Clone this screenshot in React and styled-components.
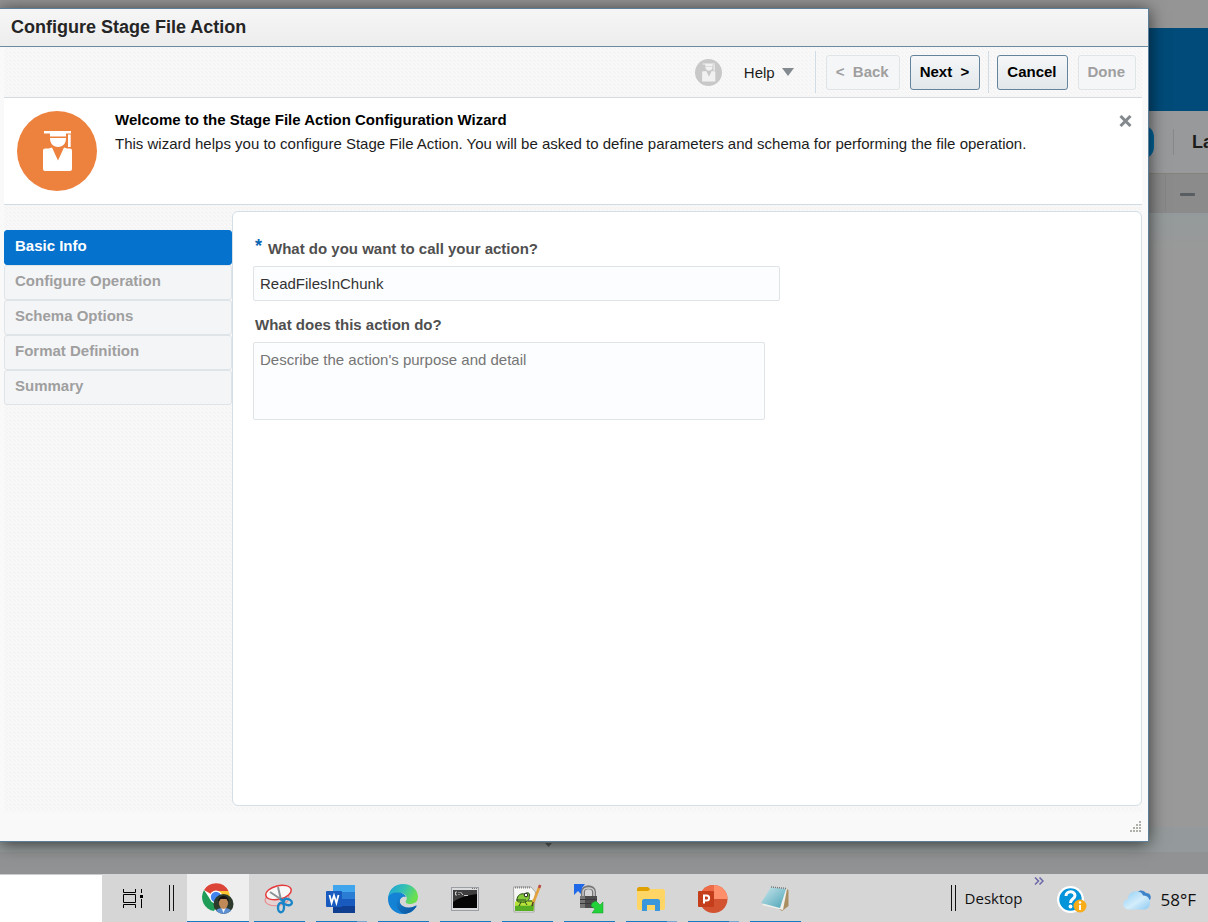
import React, { useState } from "react";
import styled, { createGlobalStyle, css } from "styled-components";

const Global = createGlobalStyle`
  *, *::before, *::after { box-sizing: border-box; }
  body { margin: 0; font-family: "Liberation Sans", Arial, sans-serif; font-size: 15px; color: #1c1c1c; }
  button, input, textarea { font: inherit; margin: 0; }
`;

const stripes = css`
  background: #f8f8f8
    linear-gradient(45deg, #f1f1f1 12%, transparent 12% 50%, #f1f1f1 50% 63%, transparent 63%) 0 0 / 4px 4px;
`;

const Screen = styled.div`
  display: flex;
  flex-direction: column;
  min-height: 100vh;
  overflow: hidden;
`;

const Workspace = styled.div`
  position: relative;
  flex: 1;
  display: flex;
  flex-direction: column;
  overflow: hidden;
  background: #999999;
`;

const TopStrip = styled.div`
  height: 28px;
  background: #959595;
`;

const BrandBar = styled.div`
  height: 83px;
  background: #004b79;
`;

const PageToolbar = styled.div`
  display: flex;
  justify-content: flex-end;
  align-items: center;
  height: 63px;
  background: #98999b;
  border-bottom: 1px solid #85847a;
`;

const Pill = styled.div`
  width: 60px;
  height: 34px;
  border-radius: 12px;
  background: #00659b;
`;

const PageDivider = styled.div`
  width: 1px;
  height: 26px;
  margin: 0 18px 0 19px;
  background: #85898c;
`;

const PageLabel = styled.div`
  width: 16px;
  overflow: hidden;
  font-size: 18px;
  line-height: 24px;
  font-weight: bold;
  color: #1c1c1c;
`;

const PageSubBar = styled.div`
  display: flex;
  justify-content: flex-end;
  height: 39px;
  background: #8b8b8b;
`;

const PageSubCell = styled.div`
  display: flex;
  align-items: center;
  padding: 2px 13px 0 14px;
  border-left: 1px solid #858585;
`;

const Minus = styled.div`
  width: 15px;
  height: 3px;
  border-radius: 1px;
  background: #575d61;
`;

const PageBody = styled.div`
  flex: 1;
  background: linear-gradient(#949a9b, #999999 40px);
`;

const PageFooter = styled.div`
  display: flex;
  justify-content: center;
  height: 47px;
  padding: 14px 112px 0 0;
  background: linear-gradient(#949a9b 25px, #919293 25px);
`;

const Dialog = styled.section`
  position: absolute;
  inset: 8px 59px 32px 0;
  display: flex;
  flex-direction: column;
  background: #f9f9f9;
  border: 1px solid #5b7f98;
  border-left: 0;
  box-shadow: 0 2px 16px rgba(0, 0, 0, 0.65);
`;

const DialogTitle = styled.h1`
  margin: 0;
  padding: 0 11px;
  font-size: 18px;
  line-height: 37px;
  font-weight: bold;
  color: #252525;
  background: linear-gradient(#f6f6f6, #ededed);
  border-bottom: 1px solid #6d8ba0;
`;

const DialogContent = styled.div`
  flex: 1;
  display: flex;
  flex-direction: column;
  margin: 0 6px 29px 4px;
  ${stripes}
`;

const Toolbar = styled.div`
  display: flex;
  justify-content: flex-end;
  align-items: center;
  gap: 10px;
  height: 51px;
  padding-right: 6px;
  border-bottom: 1px solid #d3dae0;
`;

const HelpButton = styled.button`
  display: flex;
  align-items: center;
  gap: 7px;
  margin: 0 11px 0 12px;
  padding: 0;
  border: 0;
  background: none;
  color: #1c1c1c;
`;

const Divider = styled.div`
  width: 1px;
  height: 42px;
  background: #d0dde6;
  margin: ${(p) => (p.$tight ? "0 -2px" : "0")};
`;

const ActionButton = styled.button`
  height: 35px;
  padding: 0 10px 2px 9px;
  border: 1px solid #64849c;
  border-radius: 3px;
  background: linear-gradient(#f5f7f8, #e2e7ea);
  font-weight: bold;
  color: #000;
  white-space: pre;
  &:disabled {
    border-color: #dfe4e7;
    background: #f5f6f8;
    color: #9f9f9f;
  }
`;

const Welcome = styled.div`
  display: flex;
  gap: 18px;
  height: 107px;
  padding: 13px 10px 0 13px;
  background: #fff;
  border-bottom: 1px solid #d0dde6;
`;

const WelcomeText = styled.div`
  flex: 1;
  line-height: 24px;
  color: #1c1c1c;
`;

const WelcomeTitle = styled.h2`
  margin: -3px 0 0;
  font-size: inherit;
  font-weight: bold;
  color: #000;
`;

const WelcomeBody = styled.p`
  margin: 0;
`;

const CloseButton = styled.button`
  align-self: flex-start;
  display: flex;
  padding: 4px 0;
  border: 0;
  background: none;
`;

const Body = styled.div`
  flex: 1;
  display: flex;
  padding: 6px 0;
`;

const Steps = styled.nav`
  display: flex;
  flex-direction: column;
  width: 228px;
  padding-top: 19px;
`;

const Step = styled.button`
  height: 35px;
  padding: 0 10px 4px;
  text-align: left;
  font-weight: bold;
  border: 1px solid #dfe4e9;
  border-radius: 3px;
  background: #f4f5f7;
  color: #9f9f9f;
  ${(p) =>
    p.$active &&
    css`
      border-color: #0572ce;
      background: #0572ce;
      color: #fff;
    `}
`;

const Panel = styled.form`
  flex: 1;
  display: flex;
  flex-direction: column;
  align-items: flex-start;
  padding: 26px 20px;
  background: #fff;
  border: 1px solid #d3dee6;
  border-radius: 6px;
`;

const Label = styled.label`
  padding: 0 2px;
  line-height: 22px;
  font-weight: bold;
  color: #4f4f4f;
`;

const Required = styled.span`
  font-size: 18px;
  line-height: 16px;
  color: #0a66b4;
  margin-right: 6px;
  vertical-align: 2px;
`;

const fieldStyle = css`
  display: block;
  border: 1px solid #dfe4e7;
  border-radius: 2px;
  background: #fcfdfe;
  color: #333;
  outline: 0;
`;

const TextInput = styled.input`
  ${fieldStyle}
  width: 527px;
  height: 35px;
  margin: 6px 0 13px;
  padding: 0 6px;
`;

const TextArea = styled.textarea`
  ${fieldStyle}
  width: 512px;
  height: 78px;
  margin-top: 6px;
  padding: 7px 6px;
  line-height: 20px;
  resize: none;
  &::placeholder { color: #757575; }
`;

const Grip = styled.svg`
  position: absolute;
  right: 6px;
  bottom: 8px;
`;

const Taskbar = styled.footer`
  display: flex;
  align-items: stretch;
  height: 48px;
  background: #d6d6d6;
  font-family: "Open Sans", "Noto Sans", sans-serif;
  color: #111;
`;

const SearchBox = styled.input`
  width: 102px;
  border: 0;
  border-top: 1px solid #ccc;
  background: #fff;
  outline: 0;
`;

const TaskView = styled.button`
  display: flex;
  align-items: center;
  width: 62px;
  padding: 0 0 0 20px;
  border: 0;
  background: none;
`;

const Handle = styled.div`
  align-self: center;
  width: 5px;
  height: 26px;
  margin: 0 ${(p) => p.$after}px 0 5px;
  border: solid #111;
  border-width: 0 1px;
`;

const Apps = styled.div`
  display: flex;
`;

const AppButton = styled.button`
  position: relative;
  display: flex;
  align-items: center;
  justify-content: center;
  width: 62px;
  padding: 2px 2px 0 0;
  border: 0;
  background: none;
  &::after {
    content: "";
    position: absolute;
    bottom: 0;
    left: 5px;
    right: 6px;
    height: 1px;
    background: ${(p) => (p.$multi ? "linear-gradient(90deg, #1878c0 41px, #76a9d2 41px)" : "#1878c0")};
  }
  ${(p) =>
    p.$current &&
    css`
      padding-right: 0;
      background: #eeeeee;
      &::after { left: 0; right: 0; }
    `}
`;

const Tray = styled.div`
  display: flex;
  align-items: center;
  margin-left: auto;
  padding-right: 12px;
`;

const TrayLabel = styled.span`
  font-size: 15px;
  line-height: 20px;
`;

const More = styled.button`
  align-self: flex-start;
  display: flex;
  margin: 3px 13px 0 11px;
  padding: 0;
  border: 0;
  background: none;
`;

const TrayIcon = styled.button`
  display: flex;
  margin-right: ${(p) => p.$gap}px;
  padding: 4px 0 0;
  border: 0;
  background: none;
`;

const Weather = styled.span`
  padding-top: 4px;
  font-size: 17px;
  line-height: 22px;
`;

const Graduate = ({ size, disc, mark, zoom = 1 }) => (
  <svg width={size} height={size} viewBox="0 0 80 80" aria-hidden="true">
    <circle cx="40" cy="40" r="40" fill={disc} />
    <g fill={mark} transform={`translate(40 40) scale(${zoom}) translate(-40 -40)`}>
      <path d="M27 20H54V22.500H49V25.500H33V22.500H27z" />
      <path d="M51 23.500H53.700V36H51z" />
      <path d="M33 27H49C49 32.500 46 36 41 36S33 32.500 33 27z" />
      <path d="M28 37.500C30 37.500 33 37.500 35 36.500L41 49.500L47 36.500C49 37.500 51 37.500 53 37.500Q55 37.500 55 39.500V58Q55 60 53 60H28Q26 60 26 58V39.500Q26 37.500 28 37.500z" />
    </g>
  </svg>
);

const TaskViewIcon = () => (
  <svg width="24" height="20" viewBox="0 0 24 20" fill="none" stroke="#000">
    <path d="M1.500 1V4.500H13.500V1M1.500 20V16.500H13.500V20M1.500 6.500H13.500V14.500H1.500zM19.500 1V5M19.500 11V20" />
    <path d="M18 7H21V10H18z" fill="#000" stroke="none" />
  </svg>
);

const ChromeIcon = () => (
  <svg width="32" height="32" viewBox="0 0 32 32">
    <circle cx="14" cy="14" r="14" fill="#fff" />
    <path d="M14 14L2 7A14 14 0 0 1 26.500 8H14z" fill="#dc4437" />
    <path d="M2 7A14 14 0 0 0 12 28L18 18L8 16z" fill="#1f9d58" />
    <path d="M14 8H26.500A14 14 0 0 1 14 28L19 17z" fill="#fbc62f" />
    <circle cx="14" cy="14" r="6.500" fill="#fff" />
    <circle cx="14" cy="14" r="5.200" fill="#4384ee" />
    <clipPath id="avatar"><circle cx="21.500" cy="21" r="10" /></clipPath>
    <g clipPath="url(#avatar)">
      <path d="M11 11H32V32H11z" fill="#2d3a2c" />
      <path d="M12 32C13 26 17 25 21.500 25S30 26 31 32z" fill="#5d8fd3" />
      <path d="M19 24L21.500 30L24 24z" fill="#eef2f7" />
      <ellipse cx="21.500" cy="20" rx="4.500" ry="6" fill="#c08a58" />
      <path d="M16.500 19C15.500 11 27.500 11 26.500 19L24.500 16H18.500z" fill="#17120f" />
    </g>
  </svg>
);

const SnipIcon = () => (
  <svg width="30" height="30" viewBox="0 0 30 30" fill="none">
    <ellipse cx="13" cy="15" rx="12" ry="6.500" transform="rotate(-8 13 15)" fill="#e6d2d2" stroke="#e68a8a" />
    <ellipse cx="14.500" cy="8.500" rx="13" ry="6.800" transform="rotate(-14 14.500 8.500)" fill="#f7f7f7" stroke="#e5383b" strokeWidth="1.500" />
    <path d="M14 3L17 16M6 8L18 16" stroke="#8b9296" strokeWidth="2" />
    <ellipse cx="23.500" cy="18" rx="4.500" ry="3" transform="rotate(18 23.500 18)" stroke="#1a86c8" strokeWidth="2.400" />
    <ellipse cx="17" cy="23.500" rx="3" ry="4.700" transform="rotate(4 17 23.500)" stroke="#1a86c8" strokeWidth="2.400" />
    <path d="M16 15L20 17L18 19" stroke="#1a86c8" strokeWidth="2.400" />
  </svg>
);

const WordIcon = () => (
  <svg width="30" height="28" viewBox="0 0 30 28">
    <path d="M7 0H29V7H7z" fill="#41a5ee" />
    <path d="M7 7H29V14H7z" fill="#2b7cd3" />
    <path d="M7 14H29V21H7z" fill="#185abd" />
    <path d="M7 21H29V28H7z" fill="#103f91" />
    <rect y="6" width="16" height="16" rx="1" fill="#185abd" />
    <path d="M3.500 10L5.600 18L8 10.500L10.400 18L12.500 10" fill="none" stroke="#fff" strokeWidth="1.800" />
  </svg>
);

const EdgeIcon = () => (
  <svg width="30" height="30" viewBox="0 0 30 30">
    <defs>
      <linearGradient id="edgeTop" x1="0" y1="0" x2="1" y2="0.400">
        <stop offset="0" stopColor="#1b9de2" />
        <stop offset="0.550" stopColor="#35c1b1" />
        <stop offset="1" stopColor="#6be04f" />
      </linearGradient>
      <linearGradient id="edgeLow" x1="0" y1="0" x2="1" y2="1">
        <stop offset="0" stopColor="#1585d8" />
        <stop offset="1" stopColor="#0d4f96" />
      </linearGradient>
    </defs>
    <path d="M0 14C1 5 7 0 15 0C24 0 30 6 30 13C30 18 26 20 22 20C19 20 17 19 18 17C20 14 18 9 12 9C6 9 2 11 0 14z" fill="url(#edgeTop)" />
    <path d="M0 15C0 10 5 8.500 10 8.500C14 8.500 17 10 18 13C14 12 11 15 12 19C13 24 20 27 27 22C29 21 29 22 28 23C25 28 20 30 15 30C6 30 0 23 0 15z" fill="#1583d5" />
    <path d="M12 12C8 14 7 20 10 25C12 28 15 30 18 29.700C22 29 26 26 28.500 22.500C28 21.500 27 22 26 22.500C20 25 14 23 12 19C11 16 12 13.500 15 12.500z" fill="url(#edgeLow)" />
  </svg>
);

const ConsoleIcon = () => (
  <svg width="28" height="24" viewBox="0 0 28 24">
    <rect x="0.500" y="0.500" width="27" height="23" fill="#d9dbdd" stroke="#9b9fa3" />
    <path d="M2 3H26V21H2z" fill="#050505" />
    <path d="M2 3H26V7C18 8 9 10 2 15z" fill="#3e3e3e" />
    <path d="M6 5H4.500V8H6M8 5V6M8 7V8M9.500 5L12 8M13 8.500H17" fill="none" stroke="#ccc" />
    <path d="M21 1.500H22M23 1.500H24M25 1.500H26" stroke="#777" />
  </svg>
);

const NotepadPlusIcon = () => (
  <svg width="30" height="30" viewBox="0 0 30 30">
    <path d="M1.500 3H19L23.500 8L22 28H2z" fill="#f6f7f5" stroke="#a7a9a5" />
    <path d="M3 18C9 14 16 19 22 15L21.500 27H3z" fill="#b9e23a" />
    <path d="M3 22C9 20 16 24 22 20L21.500 27H3z" fill="#58ae22" />
    <path d="M5 16C5 11 9 9 13 10C16 7 19 10 17 13C19 16 13 19 9 18C7 18 5 18 5 16z" fill="#86ca3a" stroke="#284d18" />
    <path d="M4 16H14M9 18L7 22M13 18L15 21M16 17H20" stroke="#284d18" fill="none" />
    <circle cx="14" cy="11" r="1.800" fill="#fff" stroke="#222" />
    <path d="M3 3.500H19" stroke="#888" strokeWidth="2" strokeDasharray="1 1" />
    <path d="M27 4L21 19" stroke="#e4a23c" strokeWidth="2.600" />
    <path d="M28.200 1L27 4" stroke="#b74b3e" strokeWidth="2.600" />
    <path d="M21.200 18L20 22" stroke="#574024" strokeWidth="1.500" />
  </svg>
);

const WinScpIcon = () => (
  <svg width="30" height="30" viewBox="0 0 30 30">
    <path d="M0 0H11L8 4L11 7L7 10L4 7L0 11z" fill="#1f68e8" />
    <path d="M9 13V8C9 1.500 20 1.500 20 8V13" fill="none" stroke="#777" strokeWidth="4" />
    <path d="M9 13V8C9 2.500 20 2.500 20 8V13" fill="none" stroke="#ccc" strokeWidth="1.500" />
    <path d="M6 12H23V24H6z" fill="#4c4c4c" />
    <path d="M6 12H11V24H6z" fill="#777" />
    <path d="M6 15.500H23M6 19.500H23" stroke="#3a3a3a" />
    <path d="M18 19L22 17L26 21L29 18V29H18L21 25L17 22z" fill="#22d238" stroke="#169b29" strokeWidth="0.500" />
  </svg>
);

const FolderIcon = () => (
  <svg width="28" height="24" viewBox="0 0 28 24">
    <path d="M0 2C0 1 1 0 2 0H11L13 2V6H0z" fill="#dfa000" />
    <path d="M0 4H11L14 2H26C27 2 28 3 28 4V21C28 22 27 23 26 23H2C1 23 0 22 0 21z" fill="#ffd666" />
    <path d="M5 24V14C5 13 6 12 7 12H21C22 12 23 13 23 14V24H18V18H10V24z" fill="#3b97dc" />
  </svg>
);

const PowerPointIcon = () => (
  <svg width="30" height="28" viewBox="0 0 30 28">
    <circle cx="15.500" cy="14" r="14" fill="#d35230" />
    <path d="M15.500 0A14 14 0 0 1 29.500 14H15.500z" fill="#ff8f6b" />
    <path d="M15.500 0V14H1.500A14 14 0 0 1 15.500 0z" fill="#ed6c47" />
    <rect y="6" width="16" height="16" rx="1" fill="#c43e1c" />
    <path d="M6 18.500V10.500H8.500C12 10.500 12 15.500 8.500 15.500H6" fill="none" stroke="#fff" strokeWidth="2" />
  </svg>
);

const NotepadIcon = () => (
  <svg width="28" height="28" viewBox="0 0 28 28">
    <path d="M24 3L27.500 5V21L21 26L18 24z" fill="#a98e62" />
    <path d="M22 3L26 4L22 25L1 20z" fill="#f1f1ec" />
    <defs>
      <linearGradient id="pad" x1="0" y1="0" x2="1" y2="1">
        <stop offset="0" stopColor="#cde9ee" />
        <stop offset="1" stopColor="#4ba3b7" />
      </linearGradient>
    </defs>
    <path d="M10 2L25 4L19 23L0 18z" fill="url(#pad)" />
    <path d="M10 2L26 3.500" stroke="#777" strokeWidth="1.500" strokeDasharray="1 1" />
  </svg>
);

const HelpTrayIcon = () => (
  <svg width="30" height="28" viewBox="0 0 30 28">
    <circle cx="13.500" cy="13.500" r="13.500" fill="#fff" />
    <circle cx="13.500" cy="13.500" r="11.200" fill="#0494da" />
    <path d="M9 10C9 4.500 18 4.500 18 9.500C18 13 13.500 12.500 13.500 17" fill="none" stroke="#fff" strokeWidth="3" />
    <circle cx="13.500" cy="20.500" r="1.900" fill="#fff" />
    <circle cx="23" cy="20" r="6.500" fill="#f8ac18" />
    <path d="M23 19V24" stroke="#fff" strokeWidth="2" />
    <circle cx="23" cy="16.500" r="1.200" fill="#fff" />
  </svg>
);

const CloudIcon = () => (
  <svg width="28" height="20" viewBox="0 0 28 20">
    <defs>
      <linearGradient id="cloud" x1="0" y1="0" x2="1" y2="1">
        <stop offset="0" stopColor="#8fcdf5" />
        <stop offset="0.550" stopColor="#d3edfb" />
        <stop offset="1" stopColor="#8cc9f2" />
      </linearGradient>
    </defs>
    <path d="M14 2C17 -0.500 21 0 23 3C27 3 29 6 27 10L18 8z" fill="#3f83c9" />
    <path d="M6 19.500C-1.500 19.500 -1.500 10 5 9C5 0 18 -1 20 5.500C29 5 29.500 19.500 21 19.500z" fill="url(#cloud)" />
  </svg>
);

const STEPS = ["Basic Info", "Configure Operation", "Schema Options", "Format Definition", "Summary"];

const APPS = [
  { name: "Chrome", Icon: ChromeIcon, current: true },
  { name: "Snipping Tool", Icon: SnipIcon },
  { name: "Word", Icon: WordIcon, multi: true },
  { name: "Edge", Icon: EdgeIcon },
  { name: "Command Prompt", Icon: ConsoleIcon },
  { name: "Notepad++", Icon: NotepadPlusIcon },
  { name: "WinSCP", Icon: WinScpIcon },
  { name: "File Explorer", Icon: FolderIcon, multi: true },
  { name: "PowerPoint", Icon: PowerPointIcon, multi: true },
  { name: "Notepad", Icon: NotepadIcon },
];

const GRIP_DOTS = [0, 1, 2, 3].flatMap((row) =>
  Array.from({ length: row + 1 }, (_, i) => ({ x: 9 - i * 3, y: row * 3 }))
);

export default function App() {
  const [name, setName] = useState("ReadFilesInChunk");
  const [detail, setDetail] = useState("");
  return (
    <Screen>
      <Global />
      <Workspace>
        <TopStrip />
        <BrandBar />
        <PageToolbar>
          <Pill />
          <PageDivider />
          <PageLabel>La</PageLabel>
        </PageToolbar>
        <PageSubBar>
          <PageSubCell>
            <Minus />
          </PageSubCell>
        </PageSubBar>
        <PageBody />
        <PageFooter>
          <svg width="7" height="6" viewBox="0 0 7 6" aria-hidden="true">
            <path d="M0 2H7L3.500 6z" fill="#55595b" />
          </svg>
        </PageFooter>

        <Dialog role="dialog" aria-labelledby="dialog-title">
          <DialogTitle id="dialog-title">Configure Stage File Action</DialogTitle>
          <DialogContent>
            <Toolbar>
              <Graduate size={27} disc="#c8c8c8" mark="#f1f1f1" zoom={1.35} />
              <HelpButton type="button">
                Help
                <svg width="12" height="8" viewBox="0 0 12 8" aria-hidden="true">
                  <path d="M0 0H12L6 8z" fill="#848b90" />
                </svg>
              </HelpButton>
              <Divider />
              <ActionButton disabled>{"<  Back"}</ActionButton>
              <ActionButton>{"Next  >"}</ActionButton>
              <Divider $tight />
              <ActionButton>Cancel</ActionButton>
              <ActionButton disabled>Done</ActionButton>
            </Toolbar>
            <Welcome>
              <Graduate size={80} disc="#ed813e" mark="#ffffff" />
              <WelcomeText>
                <WelcomeTitle>Welcome to the Stage File Action Configuration Wizard</WelcomeTitle>
                <WelcomeBody>
                  This wizard helps you to configure Stage File Action. You will be asked to define parameters and
                  schema for performing the file operation.
                </WelcomeBody>
              </WelcomeText>
              <CloseButton type="button" aria-label="Close">
                <svg width="13" height="12" viewBox="0 0 13 12" aria-hidden="true">
                  <path d="M1.500 1L11.500 11M11.500 1L1.500 11" stroke="#84898d" strokeWidth="3" />
                </svg>
              </CloseButton>
            </Welcome>
            <Body>
              <Steps>
                {STEPS.map((step, i) => (
                  <Step key={step} type="button" $active={i === 0}>
                    {step}
                  </Step>
                ))}
              </Steps>
              <Panel>
                <Label htmlFor="action-name">
                  <Required>*</Required>What do you want to call your action?
                </Label>
                <TextInput id="action-name" value={name} onChange={(e) => setName(e.target.value)} />
                <Label htmlFor="action-detail">What does this action do?</Label>
                <TextArea
                  id="action-detail"
                  placeholder="Describe the action's purpose and detail"
                  value={detail}
                  onChange={(e) => setDetail(e.target.value)}
                />
              </Panel>
            </Body>
          </DialogContent>
          <Grip width="12" height="12" viewBox="0 0 12 12" aria-hidden="true">
            {GRIP_DOTS.map((d) => (
              <rect key={`${d.x}-${d.y}`} x={d.x} y={d.y} width="2" height="2" fill="#b0b0aa" />
            ))}
          </Grip>
        </Dialog>
      </Workspace>

      <Taskbar>
        <SearchBox type="search" aria-label="Search" />
        <TaskView type="button" aria-label="Task view">
          <TaskViewIcon />
        </TaskView>
        <Handle $after={13} />
        <Apps>
          {APPS.map(({ name: label, Icon, current, multi }) => (
            <AppButton key={label} type="button" aria-label={label} $current={current} $multi={multi}>
              <Icon />
            </AppButton>
          ))}
        </Apps>
        <Tray>
          <Handle $after={9} />
          <TrayLabel>Desktop</TrayLabel>
          <More type="button" aria-label="More">
            <svg width="10" height="8" viewBox="0 0 10 8" fill="none" stroke="#6a66a8" strokeWidth="1.500">
              <path d="M1 0.500L4.500 4L1 7.500M5.500 0.500L9 4L5.500 7.500" />
            </svg>
          </More>
          <TrayIcon type="button" aria-label="Support" $gap={36}>
            <HelpTrayIcon />
          </TrayIcon>
          <TrayIcon type="button" aria-label="Weather" $gap={10}>
            <CloudIcon />
          </TrayIcon>
          <Weather>58°F</Weather>
        </Tray>
      </Taskbar>
    </Screen>
  );
}
